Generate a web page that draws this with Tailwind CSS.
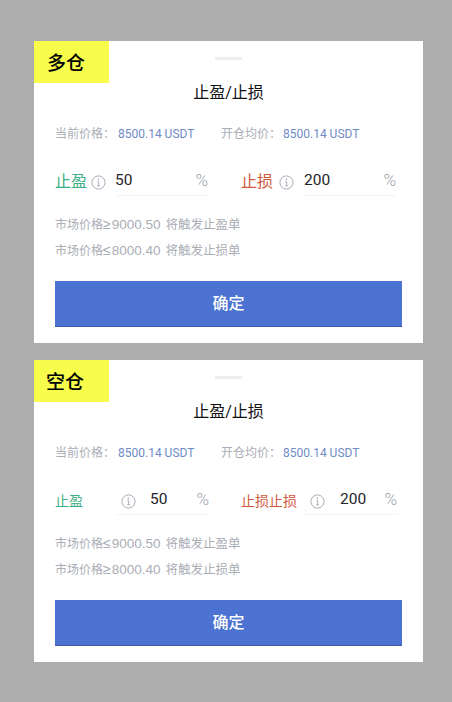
<!DOCTYPE html>
<html lang="zh">
<head>
<meta charset="utf-8">
<script src="https://cdn.jsdelivr.net/npm/@tailwindcss/browser@4"></script>
</head>
<body class="m-0 bg-[#adadad]">
<main class="w-[452px] h-[702px] pt-[41px] pl-[34px] flex flex-col gap-[17px] font-['Roboto','Noto_Sans_CJK_SC',sans-serif]">

<section class="relative w-[389px] h-[302px] bg-white px-[21px] pt-[16px] flex flex-col">
  <div class="absolute left-0 top-0 w-[75px] h-[42px] bg-[#f8fc4b] pl-[13px] pt-[9px] text-[19px] leading-[28px] text-black font-medium">多仓</div>
  <div class="mx-auto w-[27px] h-[3px] bg-[#eceef1]"></div>
  <h2 class="mt-[21px] text-center text-[16px] leading-[24px] text-[#111] font-normal">止盈/止损</h2>
  <div class="mt-[19px] flex items-center text-[12px] leading-[20px] h-[20px]">
    <div class="w-[166px] flex items-center"><span class="text-[#a9adb5]">当前价格：</span><span class="text-[#6f8bc6] ml-[3px]">8500.14 USDT</span></div>
    <div class="flex items-center"><span class="text-[#a9adb5]">开仓均价：</span><span class="text-[#6f8bc6] ml-[2px]">8500.14 USDT</span></div>
  </div>
  <div class="mt-[20px] flex h-[32px] pt-[4px]">
    <div class="w-[186px] flex items-center">
      <span class="text-[16px] text-[#3fae84] w-[36px]">止盈</span>
      <svg class="w-[15px] h-[15px]" viewBox="0 0 15 15" fill="none" stroke="#a9adb5"><circle cx="7.5" cy="7.5" r="6.6"/><path d="M6.3 6.6h1.4v4.2M6.2 10.8h2.8" stroke-width="1"/><circle cx="7.4" cy="4.4" r=".8" fill="#a9adb5" stroke="none"/></svg>
      <div class="ml-[9px] w-[94px] h-full border-b border-[#f3f4f6] flex items-center justify-between pb-[2px] pr-[1px]"><span class="text-[15.5px] text-[#1f2329]">50</span><span class="text-[17px] font-light text-[#9ea3ad]">%</span></div>
    </div>
    <div class="flex items-center">
      <span class="text-[16px] text-[#cf5a3e] w-[38px]">止损</span>
      <svg class="w-[15px] h-[15px]" viewBox="0 0 15 15" fill="none" stroke="#a9adb5"><circle cx="7.5" cy="7.5" r="6.6"/><path d="M6.3 6.6h1.4v4.2M6.2 10.8h2.8" stroke-width="1"/><circle cx="7.4" cy="4.4" r=".8" fill="#a9adb5" stroke="none"/></svg>
      <div class="ml-[9px] w-[94px] h-full border-b border-[#f3f4f6] flex items-center justify-between pl-[1px] pb-[2px] pr-[1px]"><span class="text-[15.5px] text-[#1f2329]">200</span><span class="text-[17px] font-light text-[#9ea3ad]">%</span></div>
    </div>
  </div>
  <p class="mt-[15px] h-[26px] text-[12px] leading-[26px] text-[#a9adb5] font-['Liberation_Sans','Noto_Sans_CJK_SC',sans-serif]">市场价格<span class="text-[14px]">≥</span><span class="text-[13.5px] ml-[1px]">9000.50</span><span class="text-[12.5px] ml-[5px]">将触发止盈单</span></p>
  <p class="h-[26px] text-[12px] leading-[26px] text-[#a9adb5] font-['Liberation_Sans','Noto_Sans_CJK_SC',sans-serif]">市场价格<span class="text-[14px]">≤</span><span class="text-[13.5px] ml-[1px]">8000.40</span><span class="text-[12.5px] ml-[5px]">将触发止损单</span></p>
  <button class="mt-[18px] h-[46px] w-[347px] bg-[#4c73d1] border-b border-[#3c5aa8] pt-[1px] text-white text-[16px] font-medium">确定</button>
</section>

<section class="relative w-[389px] h-[302px] bg-white px-[21px] pt-[16px] flex flex-col">
  <div class="absolute left-0 top-0 w-[75px] h-[42px] bg-[#f8fc4b] pl-[12px] pt-[9px] text-[19px] leading-[28px] text-black font-medium">空仓</div>
  <div class="mx-auto w-[27px] h-[3px] bg-[#eceef1]"></div>
  <h2 class="mt-[21px] text-center text-[16px] leading-[24px] text-[#111] font-normal">止盈/止损</h2>
  <div class="mt-[19px] flex items-center text-[12px] leading-[20px] h-[20px]">
    <div class="w-[166px] flex items-center"><span class="text-[#a9adb5]">当前价格：</span><span class="text-[#6f8bc6] ml-[3px]">8500.14 USDT</span></div>
    <div class="flex items-center"><span class="text-[#a9adb5]">开仓均价：</span><span class="text-[#6f8bc6] ml-[2px]">8500.14 USDT</span></div>
  </div>
  <div class="mt-[20px] flex h-[32px] pt-[4px]">
    <div class="w-[186px] flex items-center">
      <span class="text-[14px] text-[#3fae84] w-[66px]">止盈</span>
      <svg class="w-[15px] h-[15px]" viewBox="0 0 15 15" fill="none" stroke="#a9adb5"><circle cx="7.5" cy="7.5" r="6.6"/><path d="M6.3 6.6h1.4v4.2M6.2 10.8h2.8" stroke-width="1"/><circle cx="7.4" cy="4.4" r=".8" fill="#a9adb5" stroke="none"/></svg>
      <div class="-ml-[20px] w-[94px] h-full border-b border-[#f3f4f6] flex items-center justify-between pl-[34px] pb-[2px] pr-[1px]"><span class="text-[15.5px] text-[#1f2329]">50</span><span class="text-[17px] font-light text-[#9ea3ad]">%</span></div>
    </div>
    <div class="flex items-center">
      <span class="text-[14px] text-[#cf5a3e] w-[69px]">止损止损</span>
      <svg class="w-[15px] h-[15px]" viewBox="0 0 15 15" fill="none" stroke="#a9adb5"><circle cx="7.5" cy="7.5" r="6.6"/><path d="M6.3 6.6h1.4v4.2M6.2 10.8h2.8" stroke-width="1"/><circle cx="7.4" cy="4.4" r=".8" fill="#a9adb5" stroke="none"/></svg>
      <div class="-ml-[21px] w-[94px] h-full border-b border-[#f3f4f6] flex items-center justify-between pl-[36px] pb-[2px] pr-[1px]"><span class="text-[15.5px] text-[#1f2329]">200</span><span class="text-[17px] font-light text-[#9ea3ad]">%</span></div>
    </div>
  </div>
  <p class="mt-[15px] h-[26px] text-[12px] leading-[26px] text-[#a9adb5] font-['Liberation_Sans','Noto_Sans_CJK_SC',sans-serif]">市场价格<span class="text-[14px]">≤</span><span class="text-[13.5px] ml-[1px]">9000.50</span><span class="text-[12.5px] ml-[5px]">将触发止盈单</span></p>
  <p class="h-[26px] text-[12px] leading-[26px] text-[#a9adb5] font-['Liberation_Sans','Noto_Sans_CJK_SC',sans-serif]">市场价格<span class="text-[14px]">≥</span><span class="text-[13.5px] ml-[1px]">8000.40</span><span class="text-[12.5px] ml-[5px]">将触发止损单</span></p>
  <button class="mt-[18px] h-[46px] w-[347px] bg-[#4c73d1] border-b border-[#3c5aa8] pt-[1px] text-white text-[16px] font-medium">确定</button>
</section>

</main>
</body>
</html>
